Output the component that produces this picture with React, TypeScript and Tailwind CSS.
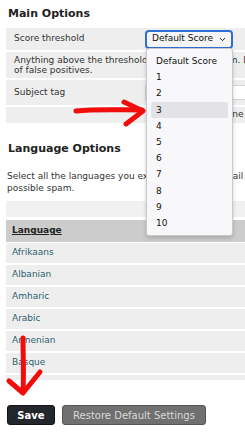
import { ChevronDown } from "lucide-react"

const scores = ["Default Score", "1", "2", "3", "4", "5", "6", "7", "8", "9", "10"]
const languages = ["Afrikaans", "Albanian", "Amharic", "Arabic", "Armenian", "Basque", "Belarusian"]

function RedArrows() {
  return (
    <svg className="absolute left-0 top-0 pointer-events-none" width="245" height="434" viewBox="0 0 245 434">
      <g fill="none" stroke="#f20d0d" strokeWidth="5" strokeLinecap="round" strokeLinejoin="round">
        <path d="M76 111 C95 109 118 110 142 110" />
        <path d="M124 102 L143 111 L126 124" />
        <path d="M23 338 C23 355 24 372 23 392" />
        <path d="M9 381 L23 393 L40 372" />
      </g>
    </svg>
  )
}

function ScoreDropdown() {
  return (
    <div className="absolute left-[146px] top-[48px] w-[87px] rounded-[3px] border border-[#c9c9cc] bg-[#f8f8fa] py-[4px] shadow-[0_2px_4px_rgba(0,0,0,0.18)]">
      {scores.map((s) => (
        <div
          key={s}
          className={
            s === "3"
              ? "mx-[4px] h-[16.2px] rounded-[2px] bg-[#e2e2e7] pl-[5px] leading-[16.2px] text-[#111]"
              : "mx-[4px] h-[16.2px] pl-[5px] leading-[16.2px] text-[#111]"
          }
        >
          {s}
        </div>
      ))}
    </div>
  )
}

export default function App() {
  return (
    <div className="relative h-[434px] w-[245px] overflow-hidden bg-white text-[9px] text-[#333] [font-family:'DejaVu_Sans',Verdana,sans-serif]">
      <div className="w-[330px] pl-[6px]">
        <h2 className="ml-[2px] mt-[7px] text-[11px] font-bold leading-[13px] text-[#222]">Main Options</h2>

        <div className="mt-[8px] flex flex-col gap-[2px]">
          <div className="flex h-[22px] items-center bg-[#eeeeee] pl-[8px]">
            <span className="w-[131px]">Score threshold</span>
            <div className="flex h-[19px] w-[88px] items-center justify-between rounded-[4px] border-2 border-[#2f6fd3] bg-[#f5f5f5] pl-[5px] pr-[4px] text-[#111]">
              <span>Default Score</span>
              <ChevronDown size={9} strokeWidth={2.5} />
            </div>
          </div>

          <div className="h-[26px] overflow-hidden whitespace-nowrap bg-[#eeeeee] pl-[8px] pt-[3px] leading-[10px]">
            Anything above the threshold is considered spam. Lower values increase the number
            <br />
            of false positives.
          </div>

          <div className="flex h-[25px] items-center bg-[#eeeeee] pl-[8px]">
            <span className="w-[131px]">Subject tag</span>
            <div className="h-[15px] w-[160px] border border-[#d4d4d4] bg-white" />
          </div>

          <div className="flex h-[16px] items-center whitespace-nowrap bg-[#eeeeee] pl-[8px]">
            <span className="w-[138px]" />
            <span>Prepend subject line</span>
          </div>
        </div>

        <h2 className="ml-[2px] mt-[19px] text-[11px] font-bold leading-[13px] text-[#222]">Language Options</h2>

        <p className="ml-[1px] mt-[16px] whitespace-nowrap leading-[11.5px]">
          Select all the languages you expect to receive email in. Email in any other language will be treated as
          <br />
          possible spam.
        </p>

        <div className="mt-[7px] h-[16px] bg-[#f1f1f1]" />

        <div className="mt-[3px] flex h-[22px] items-center bg-[#cccccc] pl-[6px]">
          <span className="font-bold text-[#222] underline">Language</span>
        </div>

        <div className="mt-[1px] flex h-[137px] flex-col gap-[2px] overflow-hidden">
          {languages.map((l) => (
            <div key={l} className="flex h-[20px] shrink-0 items-center bg-[#eeeeee] pl-[6px] text-[#2c5f70]">
              {l}
            </div>
          ))}
        </div>

        <div className="ml-[1px] mt-[25px] flex gap-[7px] text-[10px]">
          <button className="h-[20px] w-[48px] rounded-[3px] border border-[#121416] bg-[#23272b] font-bold text-white">
            Save
          </button>
          <button className="h-[20px] w-[144px] rounded-[3px] border border-[#555] bg-[#707070] text-[#d9d9d9]">
            Restore Default Settings
          </button>
        </div>
      </div>

      <ScoreDropdown />
      <RedArrows />
    </div>
  )
}
